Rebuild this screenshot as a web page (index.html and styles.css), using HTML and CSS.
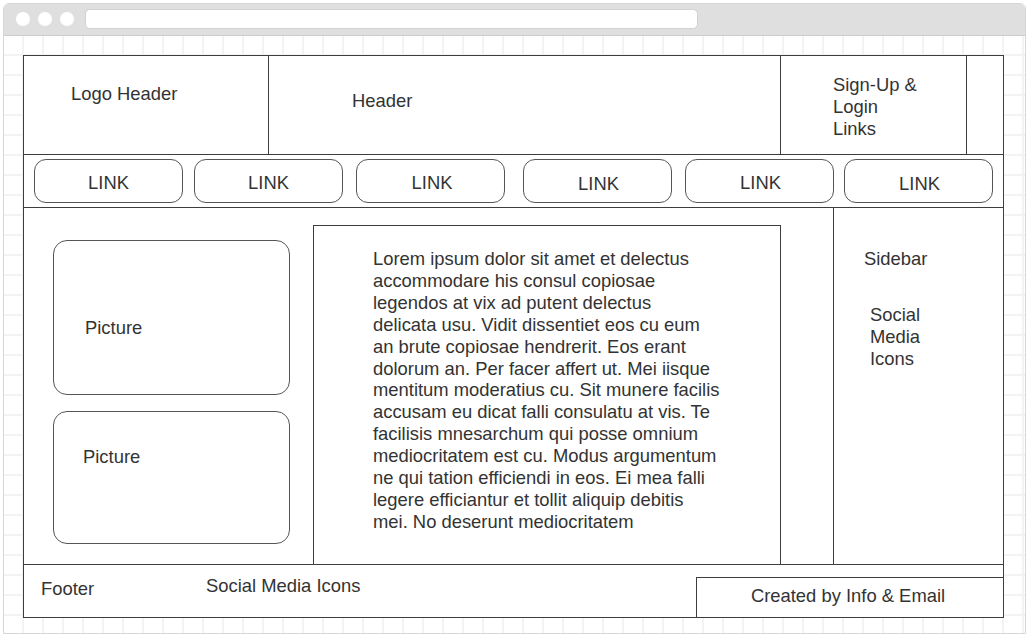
FILE: index.html
```html
<!DOCTYPE html>
<html lang="en">
<head>
<meta charset="utf-8">
<title>Wireframe</title>
<link rel="stylesheet" href="styles.css">
</head>
<body>
<div class="window">
  <div class="chrome">
    <span class="dot"></span><span class="dot"></span><span class="dot"></span>
    <div class="address"></div>
  </div>
  <div class="canvas">
    <div class="wire">
      <header class="top">
        <div class="cell logo">Logo Header</div>
        <div class="cell title">Header</div>
        <div class="cell auth">Sign-Up &amp;<br>Login<br>Links</div>
        <div class="cell spare"></div>
      </header>
      <nav class="nav">
        <a class="link">LINK</a>
        <a class="link">LINK</a>
        <a class="link">LINK</a>
        <a class="link">LINK</a>
        <a class="link">LINK</a>
        <a class="link">LINK</a>
      </nav>
      <main class="main">
        <div class="pics">
          <div class="pic pic-a">Picture</div>
          <div class="pic pic-b">Picture</div>
        </div>
        <article class="content">
          <p class="lorem">Lorem ipsum dolor sit amet et delectus<br>accommodare his consul copiosae<br>legendos at vix ad putent delectus<br>delicata usu. Vidit dissentiet eos cu eum<br>an brute copiosae hendrerit. Eos erant<br>dolorum an. Per facer affert ut. Mei iisque<br>mentitum moderatius cu. Sit munere facilis<br>accusam eu dicat falli consulatu at vis. Te<br>facilisis mnesarchum qui posse omnium<br>mediocritatem est cu. Modus argumentum<br>ne qui tation efficiendi in eos. Ei mea falli<br>legere efficiantur et tollit aliquip debitis<br>mei. No deserunt mediocritatem</p>
        </article>
        <div class="gutter"></div>
        <aside class="sidebar">
          <div class="side-title">Sidebar</div>
          <div class="side-social">Social<br>Media<br>Icons</div>
        </aside>
      </main>
      <footer class="footer">
        <span class="foot-label">Footer</span>
        <span class="foot-social">Social Media Icons</span>
        <div class="credit">Created by Info &amp; Email</div>
      </footer>
    </div>
  </div>
</div>
</body>
</html>
```

FILE: styles.css
```css
* { box-sizing: border-box; }

html, body {
  margin: 0;
  padding: 0;
  background: #ffffff;
}

body {
  font-family: "Liberation Sans", Arial, sans-serif;
  font-size: 18.4px;
  line-height: 22px;
  color: #333333;
}

.window {
  margin: 3px 0 0 3px;
  width: 1023px;
  height: 631px;
  border: 1px solid #d6d6d6;
  border-radius: 6px 6px 0 0;
  overflow: hidden;
  display: flex;
  flex-direction: column;
}

.chrome {
  height: 32px;
  flex: none;
  background: #dfdfdf;
  border-bottom: 1px solid #cdcdcd;
  display: flex;
  align-items: center;
  padding: 0 0 1px 12px;
  gap: 8px;
}

.dot {
  width: 14px;
  height: 14px;
  border-radius: 50%;
  background: #ffffff;
  flex: none;
}

.address {
  margin-left: 3px;
  width: 613px;
  height: 20px;
  background: #ffffff;
  border-radius: 5px;
  border: 1px solid #d2d2d2;
}

.canvas {
  flex: 1;
  padding: 19px 0 0 19px;
  background-color: #ffffff;
  background-image:
    linear-gradient(to right, #f3f3f3 2px, transparent 2px),
    linear-gradient(to bottom, #f3f3f3 2px, transparent 2px);
  background-size: 20px 20px;
  background-position: 18px 18px;
}

.wire {
  width: 981px;
  height: 563px;
  border: 1px solid #3d3d3d;
  background: #ffffff;
  display: flex;
  flex-direction: column;
}

/* header row */
.top {
  height: 99px;
  flex: none;
  display: flex;
  border-bottom: 1px solid #3d3d3d;
}

.cell { border-right: 1px solid #3d3d3d; }
.logo { width: 245px; padding: 27px 0 0 47px; }
.title { width: 512px; padding: 34px 0 0 83px; }
.auth { width: 186px; padding: 18px 0 0 52px; }
.spare { flex: 1; border-right: none; }

/* nav row */
.nav {
  height: 53px;
  flex: none;
  display: flex;
  align-items: center;
  padding: 0 0 0 10px;
  border-bottom: 1px solid #3d3d3d;
}

.link {
  width: 149px;
  height: 44px;
  flex: none;
  border: 1px solid #555555;
  border-radius: 12px;
  display: flex;
  align-items: center;
  justify-content: center;
  padding-top: 4px;
  color: #333333;
  text-decoration: none;
}

.link:nth-child(2) { margin-left: 11px; }
.link:nth-child(3) { margin-left: 13px; padding-left: 3px; }
.link:nth-child(4) { margin-left: 18px; padding-top: 6px; padding-left: 2px; }
.link:nth-child(5) { margin-left: 13px; padding-left: 2px; }
.link:nth-child(6) { margin-left: 10px; padding-top: 6px; padding-left: 2px; }

/* main */
.main {
  flex: 1;
  display: flex;
  border-bottom: 1px solid #3d3d3d;
}

.pics {
  width: 289px;
  padding: 32px 0 0 29px;
}

.pic {
  width: 237px;
  border: 1px solid #555555;
  border-radius: 14px;
}

.pic-a { height: 155px; padding: 76px 0 0 31px; }
.pic-b { height: 133px; margin-top: 16px; padding: 34px 0 0 29px; }

.content {
  width: 468px;
  margin-top: 17px;
  border: 1px solid #3d3d3d;
  border-bottom: none;
  padding: 22px 0 0 59px;
}

.lorem {
  margin: 0;
  line-height: 21.9px;
  white-space: nowrap;
}

.gutter {
  width: 53px;
  border-right: 1px solid #3d3d3d;
}

.sidebar {
  flex: 1;
  padding: 40px 0 0 30px;
}

.side-social {
  margin: 34px 0 0 6px;
}

/* footer */
.footer {
  flex: none;
  height: 52px;
  display: flex;
  align-items: flex-start;
}

.foot-label {
  width: 182px;
  padding: 13px 0 0 17px;
}

.foot-social {
  padding-top: 10px;
}

.credit {
  margin-left: auto;
  align-self: flex-end;
  width: 307px;
  height: 40px;
  border-top: 1px solid #3d3d3d;
  border-left: 1px solid #3d3d3d;
  text-align: center;
  padding: 7px 4px 0 0;
}
```
